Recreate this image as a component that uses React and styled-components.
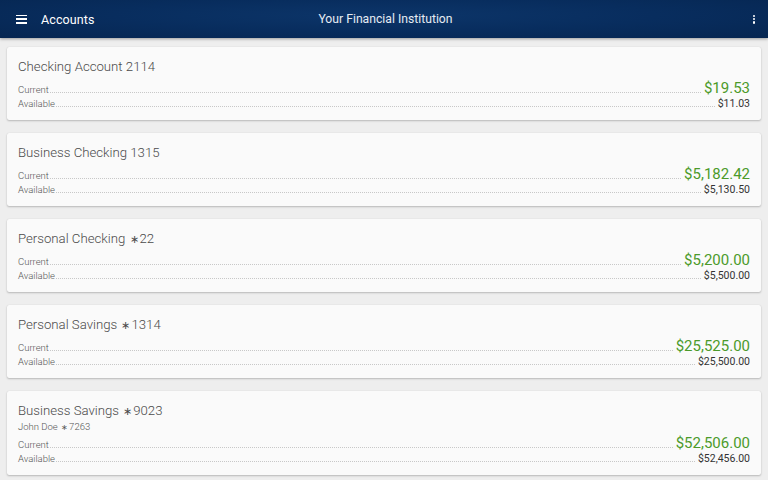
import React from 'react';
import styled, { createGlobalStyle } from 'styled-components';

const GlobalStyle = createGlobalStyle`
    html, body {
        margin: 0;
        padding: 0;
        background: #eeeeee;
        font-family: Roboto, "Liberation Sans", sans-serif;
    }
`

const Page = styled.div`
    display: flex;
    flex-direction: column;
    width: 768px;
    height: 480px;
    overflow: hidden;
    background: #eeeeee;
`

const TopBar = styled.div`
    display: flex;
    flex-direction: row;
    align-items: center;
    height: 38px;
    flex-shrink: 0;
    padding: 0 13px 0 16px;
    position: relative;
    background: radial-gradient(ellipse at 50% 40%, #0c3569 0%, #082d5e 50%, #062651 100%);
    box-shadow: 0 1px 3px rgba(0, 0, 0, 0.35);
    z-index: 1;
`

const MenuBtn = styled.div`
    display: flex;
    flex-direction: column;
    justify-content: space-between;
    width: 11px;
    height: 9px;
    margin-right: 14px;

    span {
        display: block;
        height: 1.6px;
        background: #ffffff;
    }
`

const BarTitle = styled.div`
    color: #ffffff;
    font-size: 12.5px;
    letter-spacing: 0.1px;
`

const Institution = styled.div`
    position: absolute;
    left: 0;
    right: 0;
    padding-left: 3px;
    text-align: center;
    color: #e6ebf3;
    font-size: 12.2px;
    pointer-events: none;
`

const MoreBtn = styled.div`
    display: flex;
    flex-direction: column;
    justify-content: space-between;
    height: 9px;
    margin-left: auto;

    span {
        display: block;
        width: 2.2px;
        height: 2.2px;
        border-radius: 50%;
        background: #ffffff;
    }
`

const List = styled.div`
    display: flex;
    flex-direction: column;
    gap: 13px;
    padding: 9px 7px;
`

const Card = styled.div`
    display: flex;
    flex-direction: column;
    background: #fafafa;
    border-radius: 2px;
    box-shadow: 0 1px 2px rgba(0, 0, 0, 0.22), 0 0 1px rgba(0, 0, 0, 0.12);
    padding: 10px 11px 9.5px 11px;
`

const Title = styled.div`
    font-size: 13.2px;
    font-weight: 300;
    line-height: 20px;
    height: 20px;
    color: #4a4a4a;
`

const Mark = styled.span`
    font-size: 0.8em;
    line-height: 0;
    margin: 0 1px;
`

const Sub = styled.div`
    font-size: 9.5px;
    font-weight: 300;
    line-height: 11px;
    height: 11px;
    color: #555555;
`

const Row = styled.div`
    display: flex;
    flex-direction: row;
    align-items: baseline;
    margin-top: ${props => props.first ? '1.5px' : '0'};
    height: ${props => props.big ? '18px' : '14px'};
`

const Label = styled.span`
    font-size: 9.5px;
    font-weight: 300;
    color: #555555;
`

const Dots = styled.span`
    flex: 1;
    margin: 0 3px 0 1px;
    border-bottom: 1px dotted #c8c8c8;
    height: 1px;
`

const Amount = styled.span`
    font-size: ${props => props.big ? '15px' : '10.5px'};
    line-height: ${props => props.big ? '18px' : '14px'};
    color: ${props => props.big ? '#4c9a2a' : '#333333'};
`

const accounts = [
    { name: 'Checking Account', num: '2114', current: '$19.53', available: '$11.03' },
    { name: 'Business Checking', num: '1315', current: '$5,182.42', available: '$5,130.50' },
    { name: 'Personal Checking', num: '22', masked: true, current: '$5,200.00', available: '$5,500.00' },
    { name: 'Personal Savings', num: '1314', masked: true, current: '$25,525.00', available: '$25,500.00' },
    { name: 'Business Savings', num: '9023', masked: true, owner: 'John Doe', ownerNum: '7263', current: '$52,506.00', available: '$52,456.00' },
]

const App = () => {
    return (
        <Page>
            <GlobalStyle />
            <TopBar>
                <MenuBtn><span /><span /><span /></MenuBtn>
                <BarTitle>Accounts</BarTitle>
                <Institution>Your Financial Institution</Institution>
                <MoreBtn><span /><span /><span /></MoreBtn>
            </TopBar>
            <List>
                {accounts.map(acc => (
                    <Card key={acc.name}>
                        <Title>{acc.name} {acc.masked ? <Mark>{'\u2217'}</Mark> : []}{acc.num}</Title>
                        {acc.owner ? <Sub>{acc.owner} <Mark>{'\u2217'}</Mark>{acc.ownerNum}</Sub> : []}
                        <Row first big>
                            <Label>Current</Label>
                            <Dots />
                            <Amount big>{acc.current}</Amount>
                        </Row>
                        <Row>
                            <Label>Available</Label>
                            <Dots />
                            <Amount>{acc.available}</Amount>
                        </Row>
                    </Card>
                ))}
            </List>
        </Page>
    );
}

export default App;
